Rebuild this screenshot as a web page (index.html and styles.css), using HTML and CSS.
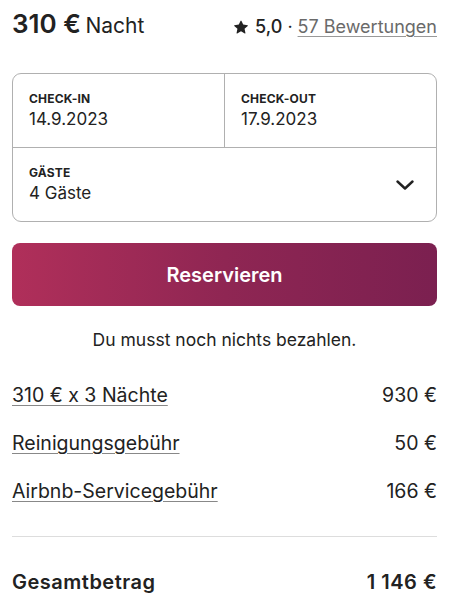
FILE: index.html
```html
<!DOCTYPE html>
<html lang="de">
<head>
<meta charset="utf-8">
<link rel="stylesheet" href="styles.css">
</head>
<body>
<div class="card">
  <div class="head">
    <div class="price"><span class="amount">310 €</span> <span class="unit">Nacht</span></div>
    <div class="rating">
      <svg class="star" viewBox="0 0 32 32" width="14" height="14"><path d="M15.1 1.58l-4.13 8.88-9.86 1.27a1 1 0 0 0-.54 1.74l7.3 6.57-1.97 9.85a1 1 0 0 0 1.48 1.06l8.62-5 8.63 5a1 1 0 0 0 1.48-1.06l-1.97-9.85 7.3-6.57a1 1 0 0 0-.55-1.73l-9.86-1.28-4.12-8.88a1 1 0 0 0-1.820z" fill="#222"/></svg>
      <span class="score">5,0</span><span class="dot">·</span><a class="reviews">57 Bewertungen</a>
    </div>
  </div>

  <div class="picker">
    <div class="dates">
      <div class="field">
        <div class="label">CHECK-IN</div>
        <div class="value">14.9.2023</div>
      </div>
      <div class="field field-right">
        <div class="label">CHECK-OUT</div>
        <div class="value">17.9.2023</div>
      </div>
    </div>
    <div class="guests">
      <div class="field">
        <div class="label">GÄSTE</div>
        <div class="value">4 Gäste</div>
      </div>
      <svg class="chev" viewBox="0 0 18 10" width="18" height="10"><path d="M1.5 1.5 L9 8.5 L16.5 1.5" fill="none" stroke="#222" stroke-width="2.4" stroke-linecap="round" stroke-linejoin="round"/></svg>
    </div>
  </div>

  <button class="reserve">Reservieren</button>
  <p class="note">Du musst noch nichts bezahlen.</p>

  <div class="lines">
    <div class="line"><a>310 € x 3 Nächte</a><span>930 €</span></div>
    <div class="line"><a>Reinigungsgebühr</a><span>50 €</span></div>
    <div class="line"><a>Airbnb-Servicegebühr</a><span>166 €</span></div>
  </div>
  <div class="total"><span>Gesamtbetrag</span><span>1 146 €</span></div>
</div>
</body>
</html>
```

FILE: styles.css
```css
* { box-sizing: border-box; }
html, body { margin: 0; padding: 0; background: #fff; }
body {
  font-family: "Inter", "Roboto", "Liberation Sans", sans-serif;
  color: #222;
}
.card { padding: 0 13px 0 12px; }
.head {
  display: flex;
  justify-content: space-between;
  align-items: baseline;
  padding-top: 8px;
  height: 61px;
}
.amount { font-size: 26px; font-weight: 600; }
.unit { font-size: 21px; font-weight: 400; }
.rating { font-size: 18px; display: flex; align-items: baseline; }
.star { margin-right: 7px; position: relative; top: 1px; }
.score { font-weight: 500; }
.dot { margin: 0 5px; }
.reviews { color: #6a6a6a; text-decoration: underline; text-underline-offset: 3px; text-decoration-color: #999; }

.picker {
  margin-top: 12px;
  border: 1px solid #b0b0b0;
  border-radius: 9px;
}
.dates { display: flex; border-bottom: 1px solid #b0b0b0; height: 74px; }
.dates .field { flex: 1; }
.field { padding: 17px 16px 0; }
.field-right { border-left: 1px solid #b0b0b0; }
.label { font-size: 12px; font-weight: 700; letter-spacing: 0.2px; line-height: 15px; }
.value { font-size: 17px; line-height: 22px; margin-top: 2px; }
.guests { display: flex; justify-content: space-between; align-items: center; height: 73px; }
.guests .field { padding-top: 0; }
.chev { margin-right: 22px; }

.reserve {
  display: block;
  width: 100%;
  margin-top: 21px;
  height: 63px;
  border: none;
  border-radius: 8px;
  background: linear-gradient(to right, #b02f5a 0%, #8f2653 50%, #7b2050 100%);
  color: #fff;
  font-family: inherit;
  font-size: 20px;
  font-weight: 600;
}
.note { text-align: center; font-size: 17.5px; margin: 22px 0 0; line-height: 24px; }

.lines { margin-top: 30px; padding-bottom: 32px; border-bottom: 1px solid #ddd; }
.line { display: flex; justify-content: space-between; font-size: 19.5px; line-height: 26px; }
.line + .line { margin-top: 22px; }
.line a { text-decoration: underline; text-underline-offset: 3px; text-decoration-color: #888; }
.total {
  display: flex;
  justify-content: space-between;
  font-size: 20px;
  font-weight: 600;
  letter-spacing: 0.5px;
  margin-top: 32px;
  line-height: 26px;
}
```
